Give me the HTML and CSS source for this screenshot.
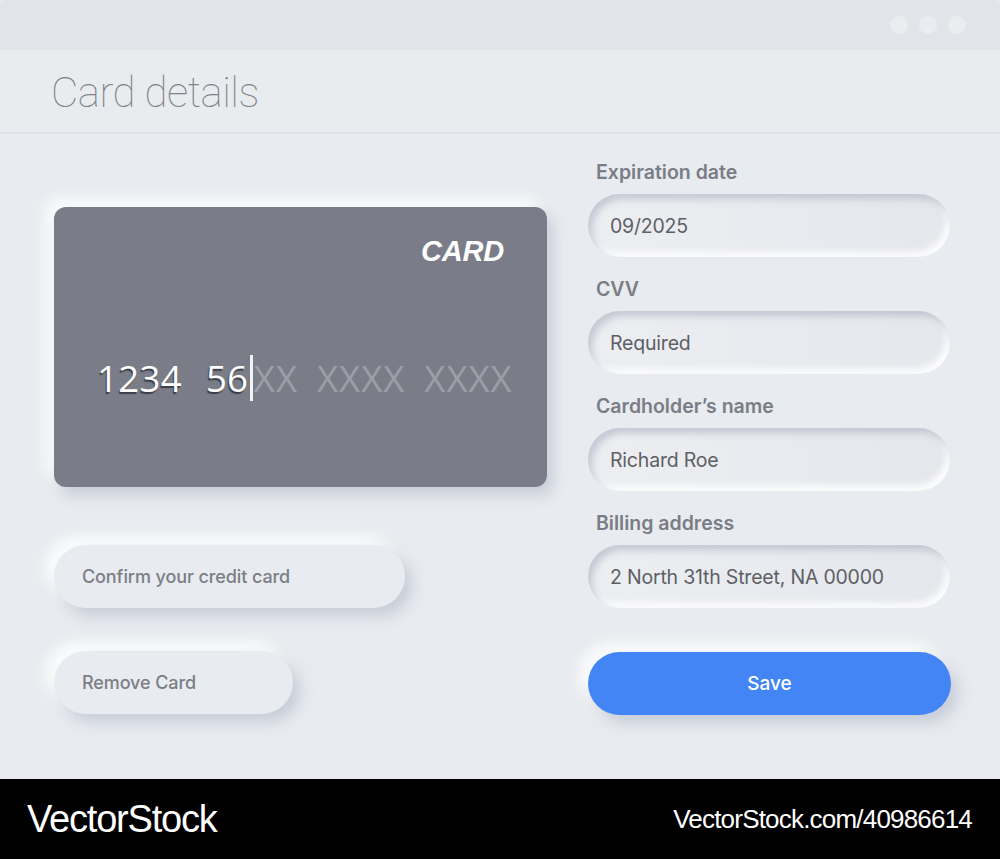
FILE: index.html
```html
<!DOCTYPE html>
<html lang="en">
<head>
<meta charset="utf-8">
<title>Card details</title>
<link rel="stylesheet" href="styles.css">
</head>
<body>
<div class="window">
  <div class="titlebar">
    <span class="dot"></span><span class="dot"></span><span class="dot"></span>
  </div>
  <header class="header">
    <h1 class="title">Card details</h1>
  </header>
  <main class="content">
    <section class="left">
      <div class="card">
        <div class="card-brand">CARD</div>
        <div class="card-number">
          <span class="grp typed first">1234</span>
          <span class="grp"><span class="typed">56</span><span class="caret"></span><span class="ph">XX</span></span>
          <span class="grp ph">XXXX</span>
          <span class="grp ph">XXXX</span>
        </div>
      </div>
      <button class="btn btn-confirm">Confirm your credit card</button>
      <button class="btn btn-remove">Remove Card</button>
    </section>
    <section class="right">
      <div class="field">
        <label class="label">Expiration date</label>
        <div class="input">09/2025</div>
      </div>
      <div class="field">
        <label class="label">CVV</label>
        <div class="input">Required</div>
      </div>
      <div class="field">
        <label class="label">Cardholder’s name</label>
        <div class="input">Richard Roe</div>
      </div>
      <div class="field">
        <label class="label">Billing address</label>
        <div class="input">2 North 31th Street, NA 00000</div>
      </div>
      <button class="save">Save</button>
    </section>
  </main>
</div>
<footer class="footer">
  <span class="brand">VectorStock</span>
  <span class="ref">VectorStock.com/40986614</span>
</footer>
</body>
</html>
```

FILE: styles.css
```css
* { box-sizing: border-box; }
html, body { margin: 0; padding: 0; }
body {
  background: #e8ebef;
  font-family: Inter, "Liberation Sans", sans-serif;
  width: 1000px;
  height: 859px;
  overflow: hidden;
}
.window {
  height: 779px;
  background: #e8ebef;
  display: flex;
  flex-direction: column;
}
.titlebar {
  height: 50px;
  background: #e1e5e9;
  border-radius: 6px 6px 0 0;
  display: flex;
  align-items: center;
  justify-content: flex-end;
  gap: 11px;
  padding-right: 34px;
}
.dot {
  width: 18px;
  height: 18px;
  border-radius: 50%;
  background: #eaedf0;
}
.header {
  height: 84px;
  background: #e9ecef;
  border-bottom: 2px solid #dfe3e7;
  display: flex;
  align-items: center;
  padding-left: 51px;
}
.title {
  margin: 0;
  font-family: Roboto, "Liberation Sans", sans-serif;
  font-weight: 100;
  font-size: 42px;
  color: #7f8288;
  letter-spacing: -0.5px;
  line-height: 1;
  padding-top: 4px;
}
.content {
  flex: 1;
  display: flex;
  padding: 27px 0 0 54px;
  gap: 41px;
}
.left {
  width: 493px;
  display: flex;
  flex-direction: column;
  align-items: flex-start;
  padding-top: 46px;
}
.card {
  width: 493px;
  height: 280px;
  background: #7a7d87;
  border-radius: 12px;
  box-shadow: 6px 8px 14px rgba(160, 168, 188, 0.45), -8px -8px 16px rgba(255, 255, 255, 0.9);
  display: flex;
  flex-direction: column;
  padding: 28px 43px 0 43px;
}
.card-brand {
  align-self: flex-end;
  font-family: "Liberation Sans", Arial, sans-serif;
  font-weight: 700;
  font-style: italic;
  font-size: 29px;
  color: #ffffff;
  letter-spacing: -0.2px;
  line-height: 32px;
}
.card-number {
  margin-top: 89px;
  display: flex;
  gap: 19px;
  font-family: "Open Sans", "Noto Sans", sans-serif;
  font-size: 36.5px;
  line-height: 44px;
  height: 44px;
  align-items: center;
}
.grp { display: inline-flex; align-items: center; }
.first { margin-right: 5px; letter-spacing: 0.4px; }
.typed {
  color: #ffffff;
  text-shadow: -1px 2px 1px rgba(40, 42, 50, 0.75);
}
.ph { color: #9c9ea7; letter-spacing: 1px; }
.caret {
  width: 3px;
  height: 46px;
  background: #f2f3f5;
  margin: 0 1px 0 2px;
}
.btn {
  border: none;
  margin: 0;
  height: 63px;
  border-radius: 32px;
  background: #e8ebef;
  font-family: Inter, "Liberation Sans", sans-serif;
  font-size: 18px;
  font-weight: 500;
  color: #7b7e86;
  text-align: left;
  padding: 0 0 0 28px;
  letter-spacing: -0.1px;
  box-shadow: 7px 8px 14px rgba(168, 175, 196, 0.5), -8px -8px 16px rgba(255, 255, 255, 0.95);
}
.btn-confirm { width: 351px; margin-top: 58px; }
.btn-remove { width: 239px; margin-top: 43px; }
.right {
  width: 363px;
  display: flex;
  flex-direction: column;
}
.field {
  display: flex;
  flex-direction: column;
  margin-bottom: 21px;
}
.label {
  font-size: 19.5px;
  font-weight: 600;
  color: #7a7d85;
  line-height: 22px;
  padding-left: 8px;
  margin-top: 0;
  margin-bottom: 11px;
}
.input {
  width: 362px;
  height: 63px;
  border-radius: 32px;
  background: linear-gradient(90deg, #eceef2 0%, #e5e7ec 100%);
  box-shadow: inset 4px 5px 7px rgba(165, 170, 188, 0.55), inset -4px -5px 7px rgba(255, 255, 255, 0.95);
  display: flex;
  align-items: center;
  padding-left: 22px;
  font-size: 19.5px;
  color: #5d5f65;
  letter-spacing: -0.2px;
}
.save {
  margin-top: 23px;
  width: 363px;
  height: 63px;
  border: none;
  border-radius: 32px;
  background: #4385f5;
  color: #ffffff;
  font-family: Inter, "Liberation Sans", sans-serif;
  font-size: 19px;
  font-weight: 500;
  box-shadow: 7px 8px 14px rgba(168, 175, 196, 0.5), -8px -8px 16px rgba(255, 255, 255, 0.95);
}
.footer {
  height: 80px;
  background: #000000;
  display: flex;
  align-items: center;
  justify-content: space-between;
  padding: 0 28px 0 27px;
  color: #ffffff;
  font-family: "Liberation Sans", Arial, sans-serif;
}
.brand { font-size: 38px; letter-spacing: -1.2px; }
.ref { font-size: 26px; letter-spacing: -0.8px; }
```
